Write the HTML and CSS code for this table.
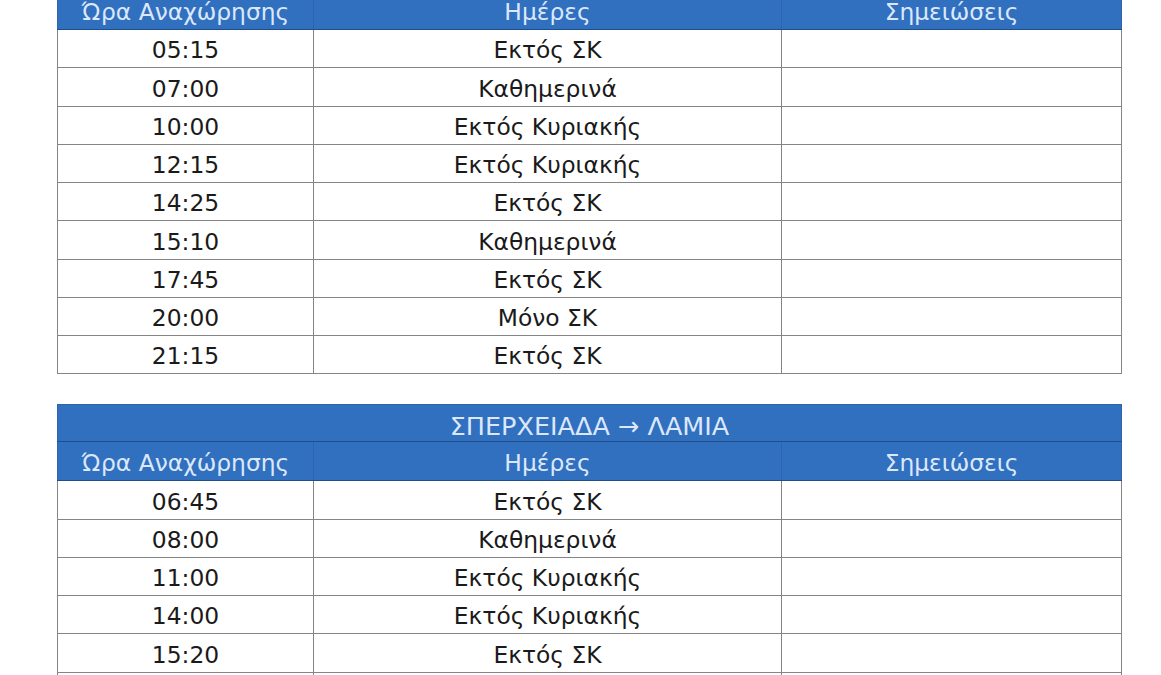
FILE: index.html
```html
<!DOCTYPE html>
<html lang="el">
<head>
<meta charset="utf-8">
<title>Δρομολόγια</title>
<link rel="stylesheet" href="styles.css">
</head>
<body>
<div class="page">
  <table class="sched first">
    <colgroup><col class="c1"><col class="c2"><col class="c3"></colgroup>
    <thead>
      <tr class="title"><th colspan="3">ΛΑΜΙΑ → ΣΠΕΡΧΕΙΑΔΑ</th></tr>
      <tr class="head"><th>Ώρα Αναχώρησης</th><th>Ημέρες</th><th>Σημειώσεις</th></tr>
    </thead>
    <tbody>
      <tr><td>05:15</td><td>Εκτός ΣΚ</td><td></td></tr>
      <tr><td>07:00</td><td>Καθημερινά</td><td></td></tr>
      <tr><td>10:00</td><td>Εκτός Κυριακής</td><td></td></tr>
      <tr><td>12:15</td><td>Εκτός Κυριακής</td><td></td></tr>
      <tr><td>14:25</td><td>Εκτός ΣΚ</td><td></td></tr>
      <tr><td>15:10</td><td>Καθημερινά</td><td></td></tr>
      <tr><td>17:45</td><td>Εκτός ΣΚ</td><td></td></tr>
      <tr><td>20:00</td><td>Μόνο ΣΚ</td><td></td></tr>
      <tr><td>21:15</td><td>Εκτός ΣΚ</td><td></td></tr>
    </tbody>
  </table>
  <table class="sched">
    <colgroup><col class="c1"><col class="c2"><col class="c3"></colgroup>
    <thead>
      <tr class="title"><th colspan="3">ΣΠΕΡΧΕΙΑΔΑ → ΛΑΜΙΑ</th></tr>
      <tr class="head"><th>Ώρα Αναχώρησης</th><th>Ημέρες</th><th>Σημειώσεις</th></tr>
    </thead>
    <tbody>
      <tr><td>06:45</td><td>Εκτός ΣΚ</td><td></td></tr>
      <tr><td>08:00</td><td>Καθημερινά</td><td></td></tr>
      <tr><td>11:00</td><td>Εκτός Κυριακής</td><td></td></tr>
      <tr><td>14:00</td><td>Εκτός Κυριακής</td><td></td></tr>
      <tr><td>15:20</td><td>Εκτός ΣΚ</td><td></td></tr>
      <tr><td>17:00</td><td>Καθημερινά</td><td></td></tr>
    </tbody>
  </table>
</div>
</body>
</html>
```
FILE: styles.css
```css
html, body {
  margin: 0;
  padding: 0;
  background: #ffffff;
  overflow: hidden;
}
body {
  font-family: "DejaVu Sans", "Noto Sans", sans-serif;
  color: #1a1a1a;
}
.page {
  padding-left: 57px;
  width: 1064px;
  display: flex;
  flex-direction: column;
  gap: 30px;
  margin-top: -47px;
}
.sched {
  width: 1064px;
  border-collapse: collapse;
  table-layout: fixed;
  font-size: 23.4px;
}
.c1 { width: 256px; }
.c2 { width: 468px; }
.c3 { width: 340px; }
.sched th {
  background: #316fbf;
  color: #dbe8fb;
  font-weight: normal;
  padding: 0;
  text-align: center;
  vertical-align: middle;
  line-height: 1;
}
.title { height: 37px; }
.title th {
  font-size: 25.5px;
  padding-top: 7px;
  border: 1px solid #2c64ad;
  border-bottom: 1px solid #1f4e8a;
}
.head { height: 39px; }
.head th {
  padding-top: 5px;
  border: 1px solid #1f4e8a;
  border-top: none;
  border-left-color: #2c64ad;
  border-right-color: #2c64ad;
}
.head th + th {
  border-left: 1px solid #1f4e8a;
}
.sched tbody tr { height: 38.25px; }
.sched td {
  padding: 5px 0 0;
  text-align: center;
  vertical-align: middle;
  border: 1px solid #858585;
  line-height: 1;
}
```
